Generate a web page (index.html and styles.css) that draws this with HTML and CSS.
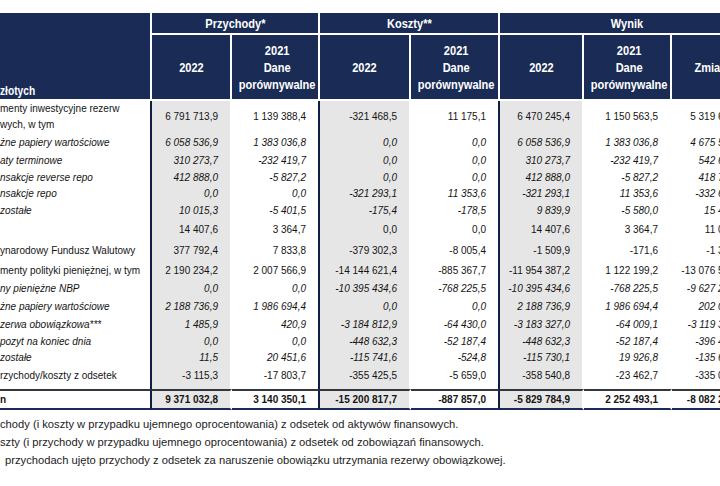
FILE: index.html
```html
<!DOCTYPE html>
<html lang="pl">
<head>
<meta charset="utf-8">
<title>Przychody i koszty z odsetek</title>
<link rel="stylesheet" href="styles.css">
</head>
<body>
<div class="page">
  <div class="clip">
    <table class="tbl">
      <colgroup>
        <col class="c-lab"><col class="c-p22"><col class="c-p21"><col class="c-k22"><col class="c-k21"><col class="c-w22"><col class="c-w21"><col class="c-zm">
      </colgroup>
      <thead>
        <tr class="hr1">
          <th class="lab-h" rowspan="2"><span class="sq sq-l">złotych</span></th>
          <th colspan="2"><span class="sq">Przychody*</span></th>
          <th colspan="2"><span class="sq">Koszty**</span></th>
          <th colspan="3"><span class="sq">Wynik</span></th>
        </tr>
        <tr class="hr2">
          <th><span class="sq">2022</span></th>
          <th><span class="sq">2021<br>Dane<br>porównywalne</span></th>
          <th><span class="sq">2022</span></th>
          <th><span class="sq">2021<br>Dane<br>porównywalne</span></th>
          <th><span class="sq">2022</span></th>
          <th><span class="sq">2021<br>Dane<br>porównywalne</span></th>
          <th><span class="sq">Zmiana</span></th>
        </tr>
      </thead>
      <tbody>
        <tr class="h32">
          <td class="lab two">menty inwestycyjne rezerw<br>wych, w tym</td>
          <td class="g">6 791 713,9</td><td class="e">1 139 388,4</td>
          <td class="g">-321 468,5</td><td class="e">11 175,1</td>
          <td class="g">6 470 245,4</td><td>1 150 563,5</td><td>5 319 681,9</td>
        </tr>
        <tr class="h19 it">
          <td class="lab">żne papiery wartościowe</td>
          <td class="g">6 058 536,9</td><td class="e">1 383 036,8</td>
          <td class="g">0,0</td><td class="e">0,0</td>
          <td class="g">6 058 536,9</td><td>1 383 036,8</td><td>4 675 500,1</td>
        </tr>
        <tr class="h17 it">
          <td class="lab">aty terminowe</td>
          <td class="g">310 273,7</td><td class="e">-232 419,7</td>
          <td class="g">0,0</td><td class="e">0,0</td>
          <td class="g">310 273,7</td><td>-232 419,7</td><td>542 693,4</td>
        </tr>
        <tr class="h17 it">
          <td class="lab">nsakcje reverse repo</td>
          <td class="g">412 888,0</td><td class="e">-5 827,2</td>
          <td class="g">0,0</td><td class="e">0,0</td>
          <td class="g">412 888,0</td><td>-5 827,2</td><td>418 715,2</td>
        </tr>
        <tr class="h16 it">
          <td class="lab">nsakcje repo</td>
          <td class="g">0,0</td><td class="e">0,0</td>
          <td class="g">-321 293,1</td><td class="e">11 353,6</td>
          <td class="g">-321 293,1</td><td>11 353,6</td><td>-332 646,7</td>
        </tr>
        <tr class="h17 it">
          <td class="lab">zostałe</td>
          <td class="g">10 015,3</td><td class="e">-5 401,5</td>
          <td class="g">-175,4</td><td class="e">-178,5</td>
          <td class="g">9 839,9</td><td>-5 580,0</td><td>15 419,9</td>
        </tr>
        <tr class="h21">
          <td class="lab"></td>
          <td class="g">14 407,6</td><td class="e">3 364,7</td>
          <td class="g">0,0</td><td class="e">0,0</td>
          <td class="g">14 407,6</td><td>3 364,7</td><td>11 042,9</td>
        </tr>
        <tr class="h21">
          <td class="lab">ynarodowy Fundusz Walutowy</td>
          <td class="g">377 792,4</td><td class="e">7 833,8</td>
          <td class="g">-379 302,3</td><td class="e">-8 005,4</td>
          <td class="g">-1 509,9</td><td>-171,6</td><td>-1 338,3</td>
        </tr>
        <tr class="h19">
          <td class="lab">menty polityki pieniężnej, w tym</td>
          <td class="g">2 190 234,2</td><td class="e">2 007 566,9</td>
          <td class="g">-14 144 621,4</td><td class="e">-885 367,7</td>
          <td class="g">-11 954 387,2</td><td>1 122 199,2</td><td>-13 076 586,4</td>
        </tr>
        <tr class="h18 it">
          <td class="lab">ny pieniężne NBP</td>
          <td class="g">0,0</td><td class="e">0,0</td>
          <td class="g">-10 395 434,6</td><td class="e">-768 225,5</td>
          <td class="g">-10 395 434,6</td><td>-768 225,5</td><td>-9 627 209,1</td>
        </tr>
        <tr class="h18 it">
          <td class="lab">żne papiery wartościowe</td>
          <td class="g">2 188 736,9</td><td class="e">1 986 694,4</td>
          <td class="g">0,0</td><td class="e">0,0</td>
          <td class="g">2 188 736,9</td><td>1 986 694,4</td><td>202 042,5</td>
        </tr>
        <tr class="h17 it">
          <td class="lab">zerwa obowiązkowa***</td>
          <td class="g">1 485,9</td><td class="e">420,9</td>
          <td class="g">-3 184 812,9</td><td class="e">-64 430,0</td>
          <td class="g">-3 183 327,0</td><td>-64 009,1</td><td>-3 119 317,9</td>
        </tr>
        <tr class="h17 it">
          <td class="lab">pozyt na koniec dnia</td>
          <td class="g">0,0</td><td class="e">0,0</td>
          <td class="g">-448 632,3</td><td class="e">-52 187,4</td>
          <td class="g">-448 632,3</td><td>-52 187,4</td><td>-396 444,9</td>
        </tr>
        <tr class="h16 it">
          <td class="lab">zostałe</td>
          <td class="g">11,5</td><td class="e">20 451,6</td>
          <td class="g">-115 741,6</td><td class="e">-524,8</td>
          <td class="g">-115 730,1</td><td>19 926,8</td><td>-135 656,9</td>
        </tr>
        <tr class="h23 last">
          <td class="lab">rzychody/koszty z odsetek</td>
          <td class="g">-3 115,3</td><td class="e">-17 803,7</td>
          <td class="g">-355 425,5</td><td class="e">-5 659,0</td>
          <td class="g">-358 540,8</td><td>-23 462,7</td><td>-335 078,1</td>
        </tr>
        <tr class="tot">
          <td class="lab">n</td>
          <td class="g">9 371 032,8</td><td class="e">3 140 350,1</td>
          <td class="g">-15 200 817,7</td><td class="e">-887 857,0</td>
          <td class="g">-5 829 784,9</td><td>2 252 493,1</td><td>-8 082 278,0</td>
        </tr>
      </tbody>
    </table>
  </div>
  <div class="notes">
    <p class="note">chody (i koszty w przypadku ujemnego oprocentowania) z odsetek od aktywów finansowych.</p>
    <p class="note">szty (i przychody w przypadku ujemnego oprocentowania) z odsetek od zobowiązań finansowych.</p>
    <p class="note note-in">przychodach ujęto przychody z odsetek za naruszenie obowiązku utrzymania rezerwy obowiązkowej.</p>
  </div>
</div>
</body>
</html>
```

FILE: styles.css
```css
html, body {
  margin: 0;
  padding: 0;
  background: #fff;
}

body {
  font-family: "Liberation Sans", Arial, sans-serif;
  color: #161616;
}

.page {
  padding-top: 13px;
  width: 720px;
  overflow: hidden;
}

.clip {
  width: 720px;
  overflow: hidden;
}

.tbl {
  table-layout: fixed;
  border-collapse: separate;
  border-spacing: 0;
  width: 757px;
}

.c-lab { width: 152px; }
.c-p22 { width: 80px; }
.c-p21 { width: 88px; }
.c-k22 { width: 91px; }
.c-k21 { width: 89px; }
.c-w22 { width: 84px; }
.c-w21 { width: 88px; }
.c-zm  { width: 85px; }

/* header */
th {
  background: #1a2c55;
  color: #fff;
  font-weight: bold;
  font-size: 13px;
  line-height: 17px;
  padding: 0;
  text-align: center;
  vertical-align: middle;
  border-right: 2px solid #fff;
  border-bottom: 2px solid #fff;
  white-space: nowrap;
}

.hr1 { height: 22px; }
.hr2 { height: 66px; }

.sq {
  display: inline-block;
  transform: scaleX(0.85);
}

th.lab-h {
  text-align: left;
  vertical-align: bottom;
  font-size: 12px;
  line-height: 12px;
  padding-bottom: 2px;
}

.sq-l {
  transform-origin: left center;
}

/* body */
td {
  font-size: 10px;
  line-height: 12px;
  padding: 0 12px 0 0;
  text-align: right;
  vertical-align: middle;
  white-space: nowrap;
  border-right: 2px solid transparent;
  background-clip: padding-box;
  color: #141414;
}

td.lab {
  text-align: left;
  padding: 0;
  border-right-color: #0f1f45;
}

td.two {
  line-height: 16px;
}

td.e {
  border-right-color: #0f1f45;
}

td.g {
  background-color: #e6e6e6;
}

.it td {
  font-style: italic;
}

.h16 { height: 16px; }
.h17 { height: 17px; }
.h18 { height: 18px; }
.h19 { height: 19px; }
.h21 { height: 21px; }
.h23 { height: 23px; }
.h32 { height: 32px; }

.last td {
  padding-bottom: 3px;
}

.tot {
  height: 21px;
}

.tot td {
  font-weight: bold;
  border-top: 2px solid #34363d;
  border-bottom: 2px solid #1a2c55;
}

/* footnotes */
.notes {
  margin-top: 5px;
}

.note {
  margin: 0;
  font-size: 11.2px;
  line-height: 18px;
  color: #222;
  white-space: nowrap;
}

.note-in {
  padding-left: 5px;
}
```
